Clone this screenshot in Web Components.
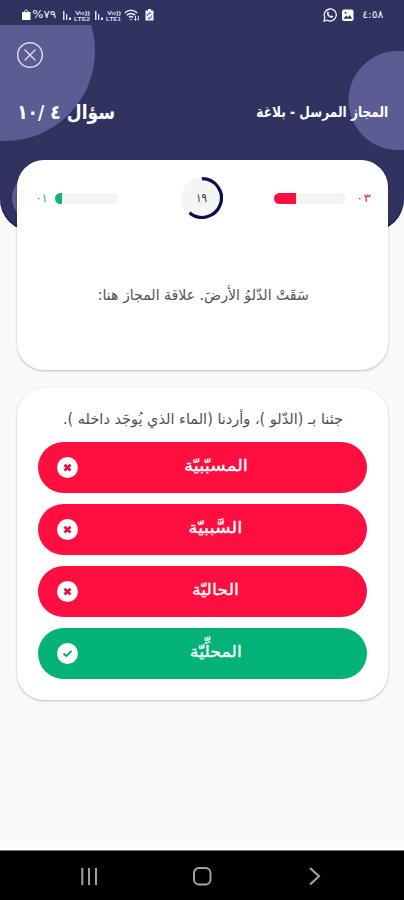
<!DOCTYPE html>
<html lang="ar" dir="rtl">
<head>
<meta charset="utf-8">
<title>سؤال</title>
<style>
html,body{margin:0;height:100%;overflow:hidden}
body{font-family:"DejaVu Sans","Noto Sans",sans-serif;background:#fafafa}
</style>
</head>
<body>
<quiz-screen></quiz-screen>
<script>
const define = (name, html, setup) => customElements.define(name, class extends HTMLElement {
  connectedCallback() {
    if (this.shadowRoot) return;
    const t = document.createElement('template');
    t.innerHTML = typeof html === 'function' ? html(this) : html;
    this.attachShadow({mode: 'open'}).append(t.content.cloneNode(true));
    if (setup) setup(this);
  }
});

/* One line of text condensed to a given width */
define('fit-text', el => `
<style>
:host{display:flex;justify-content:center;flex:none;width:${el.getAttribute('w')}px;direction:rtl;white-space:nowrap}
span{flex:none;display:block}
</style><span><slot></slot></span>`, el => {
  const s = el.shadowRoot.querySelector('span');
  s.style.transform = `scaleX(${el.getAttribute('w') / s.getBoundingClientRect().width})`;
});

define('status-bar', `
<style>
:host{display:flex;direction:ltr;justify-content:space-between;align-items:center;height:25px;padding:4px 21px 0 22px;box-sizing:border-box;color:#f2f2fa;font-size:11px;line-height:14px}
div{display:flex;align-items:center}
svg{display:block;flex:none}
</style>
<div>
  <svg width="10" height="14" viewBox="0 0 10 14"><path d="M0 4h8.500v8H0z" fill="#fff"/><path d="M2.500 5V3.500a1.800 1.800 0 0 1 3.500 0V5" fill="none" stroke="#fff"/></svg>
  <fit-text w="24">٧٩%</fit-text>
  <svg style="margin-left:6px" width="62" height="14" viewBox="0 0 62 14" fill="#dcdcec">
    <path d="M1 3h1.500v9H1zM4 6h1.300v6H4zM7 9.500h2v2.500H7zM33 3h1.500v9H33zM36 6h1.300v6H36zM39 9.500h2v2.500h-2z"/>
    <g font-family="Liberation Sans" font-weight="700" font-size="6"><text x="13" y="6.500" textLength="15" lengthAdjust="spacingAndGlyphs">Vo))</text><text x="12" y="12.500" textLength="16" lengthAdjust="spacingAndGlyphs">LTE2</text><text x="45" y="6.500" textLength="14" lengthAdjust="spacingAndGlyphs">Vo))</text><text x="44" y="12.500" textLength="15" lengthAdjust="spacingAndGlyphs">LTE1</text></g>
  </svg>
  <svg width="17" height="14" viewBox="0 0 17 14" fill="none" stroke="#e4e4f2" stroke-width="1.500"><path d="M.8 4.800q6.200-5 12.400 0M2.800 7.200q4.200-3.500 8.400 0M4.900 9.400q2.100-1.800 4.200 0"/><path d="M7 12.500l-1.300-1.600h2.600z" fill="#e4e4f2" stroke="none"/><path d="M11.500 8v4.500m-1.200-1.200 1.200 1.200 1.200-1.200M14.300 12.500V8" stroke-width="1"/></svg>
  <svg style="margin-left:4px" width="9" height="14" viewBox="0 0 9 14"><path d="M3 1h3v1.500h2.500v10h-8v-10H3z" fill="#f2f2fa"/><path d="M2.200 8q0-3 2.700-2.800M6.700 7.500q0 3-2.700 2.800M4.500 4l1.200 1.200-1.200 1M4.400 11.400l-1.200-1.100 1.200-1" fill="none" stroke="#303260" stroke-width=".8"/></svg>
</div>
<div>
  <svg width="14" height="14" viewBox="0 0 14 14"><path d="M1 13l.9-3.400A6 6 0 1 1 4.400 12.200z" fill="none" stroke="#f2f2fa" stroke-width="1.300"/><path d="M4.500 3.700c.7-.5 1 0 1.500 1.300l-.5.900c.5 1 1.200 1.700 2.300 2.200l.8-.7 1.700.9c-.3 1.600-1.600 1.800-3 1.200C5.300 8.600 4 7.200 3.900 5.400q.1-1.300.6-1.700z" fill="#f2f2fa"/></svg>
  <svg style="margin:0 8px 0 5px" width="12" height="14" viewBox="0 0 12 14"><rect y="1.500" width="11.500" height="11.500" rx="2" fill="#fff"/><path d="M1.500 10.700l2.500-3.200 2 1.800 1.800-2.300 2.400 3.700z" fill="#303260"/><circle cx="3.500" cy="4.700" r="1" fill="#303260"/></svg>
  <fit-text w="21">٤:٥٨</fit-text>
</div>`);

define('quiz-header', `
<style>
:host{display:block;height:231px;box-sizing:border-box;background:#303260;border-radius:0 0 32px 32px;overflow:hidden;position:relative;box-shadow:inset 0 -1px 1px #0c0a50;color:#fff;font-weight:700}
.blobs{position:absolute;top:25px;left:0;direction:ltr}
status-bar,.close,.titles{position:relative}
status-bar{font-weight:400}
.close{display:flex;direction:ltr;padding:16px 16px 0}
.titles{display:flex;direction:ltr;justify-content:space-between;align-items:center;padding:0 16px 0 17px;margin-top:27px;height:32px}
.n{font-size:20px;line-height:32px}.t{font-size:15px;line-height:32px}
</style>
<svg class="blobs" width="404" height="206" viewBox="0 25 404 206" fill="#5c5c94"><circle cx="5" cy="51" r="90"/><circle cx="398" cy="100.500" r="49.500"/><circle cx="37" cy="198" r="25"/></svg>
<status-bar></status-bar>
<div class="close"><svg width="28" height="28" viewBox="0 0 28 28" fill="none" stroke="#dedeef" stroke-width="1.400" stroke-linecap="round"><circle cx="14" cy="14" r="12.300"/><path d="M9 9l10 10M19 9L9 19"/></svg></div>
<div class="titles"><fit-text class="n" w="98">سؤال ٤ /١٠</fit-text><fit-text class="t" w="132">المجاز المرسل - بلاغة</fit-text></div>`);

define('score-bar', el => `
<style>
:host{display:block;width:${el.getAttribute('w')}px;height:11px;border-radius:6px;background:#f4f4f4;overflow:hidden;direction:ltr}
i{display:block;height:100%;width:${el.getAttribute('value')}px;background:${el.getAttribute('color')}}
</style><i></i>`);

define('count-timer', `
<style>
:host{display:grid;place-items:center;width:42px;height:42px;font-size:12px;color:#333}
svg,fit-text{grid-area:1/1}
</style>
<svg width="42" height="42" viewBox="0 0 42 42"><circle cx="21" cy="21" r="21" fill="#f4f5f7"/><path d="M21 1.600A19.400 19.400 0 1 1 8.500 35.800" fill="none" stroke="#0d0b50" stroke-width="3.200"/></svg>
<fit-text w="11"><slot></slot></fit-text>`);

define('quiz-card', `
<style>
:host{display:block;box-sizing:border-box;background:#fff;border-radius:27px;box-shadow:0 1px 2.500px rgba(0,0,0,.25)}
</style><slot></slot>`);

define('answer-option', el => `
<style>
:host{display:grid;grid-template-columns:21px 1fr;align-items:center;direction:ltr;height:51px;padding:0 19px;box-sizing:border-box;border-radius:26px;background:${el.hasAttribute('correct') ? '#03b277' : '#ff0e40'};color:#fff;font-size:16px;line-height:24px}
fit-text{justify-self:center;margin:0 0 3px 5px;-webkit-text-stroke:.3px #fff}
svg{display:block}
</style>
<svg width="21" height="21" viewBox="0 0 21 21"><circle cx="10.500" cy="10.500" r="10.500" fill="#fff"/>${el.hasAttribute('correct')
  ? '<path d="M6.500 10.500l2.800 2.600 5.200-5.200" fill="none" stroke="#0a9d6a" stroke-width="1.800"/>'
  : '<path d="M7.500 7.700l6 5.800M13.500 7.700l-6 5.800" fill="none" stroke="#e0143f" stroke-width="2.700"/>'}</svg>
<fit-text w="${el.getAttribute('w')}"><slot></slot></fit-text>`);

define('nav-bar', `
<style>
:host{display:flex;direction:ltr;justify-content:space-between;align-items:center;height:50px;box-sizing:border-box;background:#000;border-top:1px solid #6e7270;padding:0 83px 0 80px}
</style>
<svg width="18" height="20" viewBox="0 0 18 20" stroke="#a0a0a0" stroke-width="2"><path d="M2.300 2v17M9 2v17M16 2v17"/></svg>
<svg width="20" height="20" viewBox="0 0 20 20" fill="none" stroke="#a6a6a6" stroke-width="1.900"><rect x="1" y="2" width="16.500" height="16.500" rx="5"/></svg>
<svg width="14" height="20" viewBox="0 0 14 20" fill="none" stroke="#a6a6a6" stroke-width="2"><path d="M3 2l9 8.200L3 18.400"/></svg>`);

define('quiz-screen', `
<style>
:host{display:flex;flex-direction:column;width:404px;height:900px;background:#fafafa}
main{flex:1;position:relative;margin-top:-71px;padding:0 16px 0 17px;display:flex;flex-direction:column;gap:18px;border-bottom:3px solid #fff}
.q{height:210px;padding:17px 17px 0 18px}
.scores{display:flex;direction:ltr;align-items:center;height:42px;font-size:12px}
.g{color:#10a470}.r{color:#d9305e}
.q>fit-text{margin:61px auto 0;font-size:15px;line-height:30px;color:#555}
.a{height:312px;padding:16px 21px 0}
.a>fit-text{margin:0 auto;font-size:15px;line-height:30px;color:#505050}
.list{display:flex;flex-direction:column;gap:11px;margin-top:8px}
</style>
<quiz-header></quiz-header>
<main>
  <quiz-card class="q">
    <div class="scores">
      <fit-text class="g" w="12">٠١</fit-text><score-bar style="margin-left:8px" w="63" value="7" color="#0fb27a"></score-bar>
      <count-timer style="margin:0 51px 0 63px">١٩</count-timer>
      <score-bar w="73" value="22" color="#ff0e3e"></score-bar><fit-text class="r" style="margin-left:10px" w="15">٠٣</fit-text>
    </div>
    <fit-text w="211">سَقَتْ الدّلوُ الأرضَ. علاقة المجاز هنا:</fit-text>
  </quiz-card>
  <quiz-card class="a">
    <fit-text w="280">جئنا بـ (الدّلو )، وأردنا (الماء الذي يُوجَد داخله ).</fit-text>
    <div class="list">
      <answer-option w="64">المسبّبيّة</answer-option>
      <answer-option w="54">السَّببيّة</answer-option>
      <answer-option w="47">الحاليّة</answer-option>
      <answer-option w="52" correct>المحلِّيّة</answer-option>
    </div>
  </quiz-card>
</main>
<nav-bar></nav-bar>`);
</script>
</body>
</html>
